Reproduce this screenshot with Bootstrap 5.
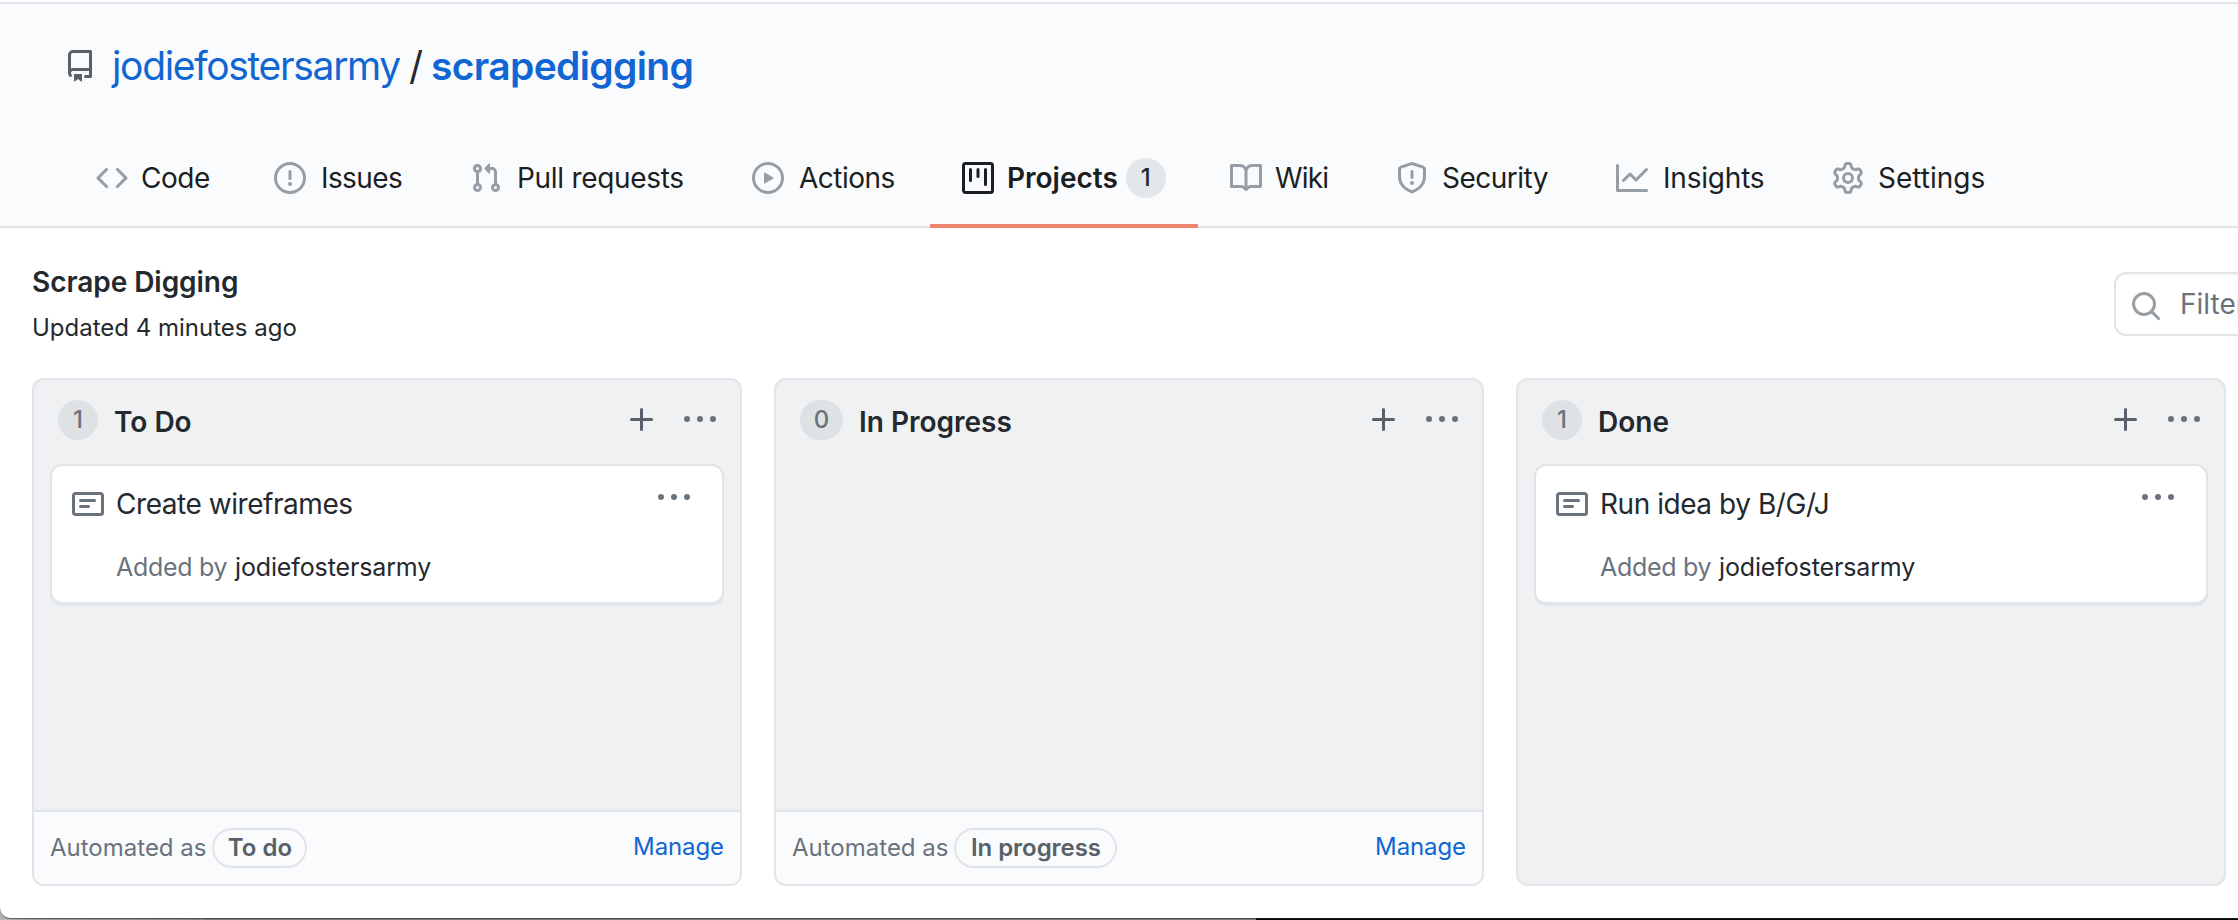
<!DOCTYPE html>
<html lang="en">
<head>
<meta charset="utf-8">
<title>Scrape Digging</title>
<link rel="stylesheet" href="https://cdn.jsdelivr.net/npm/bootstrap@5.3.0/dist/css/bootstrap.min.css">
<script src="https://cdn.jsdelivr.net/npm/bootstrap@5.3.0/dist/js/bootstrap.bundle.min.js"></script>
<style>
  html { height: 920px; overflow: hidden; }
  body {
    height: 920px; overflow: hidden;
    font-family: Inter, "Liberation Sans", sans-serif; font-size: 28px; color: #24292e;
    background: linear-gradient(90deg, #b4b4b4 0, #9a9a9a 40px, #858585 205px, #75797e 206px, #75797e 1256px, #04060f 1256px);
  }
  svg { fill: currentColor; flex: none; display: block; }
  .window { height: 918px; padding-top: 2px; background: #fff; border-bottom-left-radius: 10px; overflow: hidden; box-shadow: 0 1px 0 rgba(40,40,40,.55); }
  .repo-head { height: 226px; background: #fafbfc; border-top: 2px solid #e1e4e8; border-bottom: 2px solid #e1e4e8; padding: 46px 64px 0; }
  .repo-title { height: 32px; font-size: 39px; line-height: 32px; color: #24292e; }
  .repo-title svg { color: #586069; margin-right: 16px; }
  .repo-title a, .manage { color: #1066d2; text-decoration: none; }
  .owner { letter-spacing: -1.33px; }
  .slash { margin: 0 8px 0 9px; }
  .name { letter-spacing: -.67px; font-weight: 600; }
  .tabs { margin-top: 50px; }
  .tabs .nav-link { height: 96px; padding: 0 0 0 32px; border-bottom: 4px solid transparent; color: #1b1f23; line-height: 36px; white-space: nowrap; }
  .tabs .nav-link svg { color: #959da5; margin-right: 13px; }
  .tabs .nav-link.active { font-weight: 600; border-bottom-color: #f0866f; color: #1b1f23; }
  .tabs .nav-link.active svg { color: #1b1f23; }
  .t-code { width: 178px; letter-spacing: -.47px; }
  .t-issues { width: 196px; letter-spacing: -.6px; }
  .tabs .t-issues svg { margin-right: 15px; }
  .t-pulls { width: 282px; letter-spacing: -.3px; }
  .tabs .t-pulls svg { margin-right: 15px; }
  .t-actions { width: 210px; letter-spacing: -.5px; }
  .tabs .t-actions svg { margin-right: 15px; }
  .t-projects { width: 268px; }
  .t-wiki { width: 166px; letter-spacing: -.85px; }
  .tabs .t-wiki svg { margin-right: 13px; }
  .t-security { width: 220px; letter-spacing: -.5px; }
  .tabs .t-security svg { margin-right: 14px; }
  .t-insights { width: 216px; letter-spacing: -.2px; }
  .tabs .t-insights svg { margin-right: 15px; }
  .tabs .t-settings svg { margin-right: 14px; }
  .count { width: 40px; height: 40px; border-radius: 20px; text-align: center; font-size: 24px; line-height: 39px; font-weight: 500; flex: none; }
  .count.zero { width: 43px; }
  .tabs .count { margin-left: 8px; background: #e4e7ea; color: #24292e; line-height: 40px; }
  .board-head { height: 150px; padding: 34px 0 0 32px; }
  .board-head h1 { font-size: 28px; line-height: 40px; font-weight: 600; letter-spacing: -.05px; margin: 0 0 6px; }
  .board-head p { font-size: 24px; line-height: 40px; margin: 0; }
  .filter { width: 124px; height: 64px; margin-top: 10px; padding-left: 14px; border: 2px solid #e1e4e8; border-right: 0; border-radius: 12px 0 0 12px; color: #6a737d; box-shadow: inset 0 2px 0 rgba(225,228,232,.25); overflow: hidden; }
  .filter svg { color: #959da5; margin-right: 18px; margin-top: 4px; }
  .board { gap: 32px; padding-left: 32px; }
  .lane { width: 710px; height: 508px; flex: none; background: #eff1f3; border: 2px solid #e1e4e8; border-radius: 12px; overflow: hidden; }
  .lane-head { height: 84px; padding: 20px 24px 0 24px; }
  .lane-head .count { background: #dfe2e5; color: #6a737d; }
  .lane-head h2 { font-size: 28px; line-height: 44px; font-weight: 600; margin: 0 auto 0 16px; }
  .lane-head svg { margin-top: 4px; color: #6a737d; }
  .lane-head svg.plus { color: #586069; margin-right: 26px; }
  .note { margin: 0 16px; height: 140px; padding: 20px 32px 0 20px; background: #fff; border: 2px solid #e1e4e8; border-radius: 12px; box-shadow: 0 2px 1px rgba(27,31,35,.05); color: #6a737d; }
  .note .kind { margin: 2px 12px 0 0; }
  .note .more { margin: -4px 0 0 auto; }
  .note .body-text { color: #24292e; line-height: 36px; letter-spacing: -.45px; }
  .note .by { margin: 27px 0 0 44px; font-size: 25px; line-height: 36px; letter-spacing: -.3px; white-space: nowrap; }
  .note .by b { color: #24292e; font-weight: 400; letter-spacing: -.13px; margin-left: 1px; }
  .lane-foot { height: 74px; border-top: 2px solid #e1e4e8; background: #fafbfc; padding: 0 16px; font-size: 24px; line-height: 36px; color: #6a737d; }
  .pill { height: 40px; width: 95px; margin-left: 6px; border: 2px solid #e1e4e8; border-radius: 20px; text-align: center; font-weight: 600; color: #586069; }
  .pill.wide { width: 163px; letter-spacing: -.05px; }
  .manage { margin: -3px 0 0 auto; letter-spacing: -.1px; }
</style>
</head>
<body>
<svg width="0" height="0" class="position-absolute">
  <symbol id="plus" viewBox="0 0 16 16"><path d="M7.75 2a.75.75 0 01.75.75V7h4.25a.75.75 0 110 1.5H8.5v4.25a.75.75 0 11-1.5 0V8.5H2.75a.75.75 0 010-1.5H7V2.75A.75.75 0 017.75 2z"/></symbol>
  <symbol id="dots" viewBox="0 0 16 16"><path d="M8 9a1.5 1.5 0 100-3 1.5 1.5 0 000 3zM1.5 9a1.5 1.5 0 100-3 1.5 1.5 0 000 3zm13 0a1.5 1.5 0 100-3 1.5 1.5 0 000 3z"/></symbol>
  <symbol id="note" viewBox="0 0 16 16"><path fill-rule="evenodd" d="M0 3.75C0 2.784.784 2 1.75 2h12.5c.966 0 1.75.784 1.75 1.75v8.5A1.75 1.75 0 0114.25 14H1.75A1.75 1.75 0 010 12.25v-8.5zm1.75-.25a.25.25 0 00-.25.25v8.5c0 .138.112.25.25.25h12.5a.25.25 0 00.25-.25v-8.5a.25.25 0 00-.25-.25H1.75zM3.5 6.25a.75.75 0 01.75-.75h7a.75.75 0 010 1.5h-7a.75.75 0 01-.75-.75zm.75 2.25a.75.75 0 000 1.5h4a.75.75 0 000-1.5h-4z"/></symbol>
</svg>
<div class="window">
  <header class="repo-head">
    <div class="repo-title d-flex align-items-center">
      <svg width="32" height="32" viewBox="0 0 16 16"><path fill-rule="evenodd" d="M2 2.5A2.5 2.5 0 014.5 0h8.75a.75.75 0 01.75.75v12.5a.75.75 0 01-.75.75h-2.5a.75.75 0 110-1.5h1.75v-2h-8a1 1 0 00-.714 1.7.75.75 0 01-1.072 1.05A2.495 2.495 0 012 11.5v-9zm10.5-1V9h-8c-.356 0-.694.074-1 .208V2.5a1 1 0 011-1h8zM5 12.25v3.25a.25.25 0 00.4.2l1.45-1.087a.25.25 0 01.3 0L8.6 15.7a.25.25 0 00.4-.2v-3.25a.25.25 0 00-.25-.25h-3.5a.25.25 0 00-.25.25z"/></svg>
      <a href="#" class="owner">jodiefostersarmy</a><span class="slash">/</span><a href="#" class="name">scrapedigging</a>
    </div>
    <nav class="nav tabs flex-nowrap">
      <a href="#" class="nav-link d-flex align-items-center t-code"><svg width="32" height="32" viewBox="0 0 16 16"><path fill-rule="evenodd" d="M4.72 3.22a.75.75 0 011.06 1.06L2.06 8l3.72 3.72a.75.75 0 11-1.06 1.06L.47 8.53a.75.75 0 010-1.06l4.25-4.25zm6.56 0a.75.75 0 10-1.06 1.06L13.94 8l-3.72 3.72a.75.75 0 101.06 1.06l4.25-4.25a.75.75 0 000-1.06l-4.25-4.25z"/></svg>Code</a>
      <a href="#" class="nav-link d-flex align-items-center t-issues"><svg width="32" height="32" viewBox="0 0 16 16"><path fill-rule="evenodd" d="M8 1.5a6.5 6.5 0 100 13 6.5 6.5 0 000-13zM0 8a8 8 0 1116 0A8 8 0 010 8zm9 3a1 1 0 11-2 0 1 1 0 012 0zm-.25-6.25a.75.75 0 00-1.5 0v3.5a.75.75 0 001.5 0v-3.5z"/></svg>Issues</a>
      <a href="#" class="nav-link d-flex align-items-center t-pulls"><svg width="32" height="32" viewBox="0 0 16 16"><path fill-rule="evenodd" d="M7.177 3.073L9.573.677A.25.25 0 0110 .854v4.792a.25.25 0 01-.427.177L7.177 3.427a.25.25 0 010-.354zM3.75 2.5a.75.75 0 100 1.5.75.75 0 000-1.5zm-2.25.75a2.25 2.25 0 113 2.122v5.256a2.251 2.251 0 11-1.5 0V5.372A2.25 2.25 0 011.5 3.25zM11 2.5h-1V4h1a1 1 0 011 1v5.628a2.251 2.251 0 101.5 0V5A2.5 2.5 0 0011 2.5zm1 10.25a.75.75 0 111.5 0 .75.75 0 01-1.5 0zM3.75 12a.75.75 0 100 1.5.75.75 0 000-1.5z"/></svg>Pull requests</a>
      <a href="#" class="nav-link d-flex align-items-center t-actions"><svg width="32" height="32" viewBox="0 0 16 16"><path fill-rule="evenodd" d="M1.5 8a6.5 6.5 0 1113 0 6.5 6.5 0 01-13 0zM8 0a8 8 0 100 16A8 8 0 008 0zM6.379 5.227A.25.25 0 006 5.442v5.117a.25.25 0 00.379.214l4.264-2.559a.25.25 0 000-.428L6.379 5.227z"/></svg>Actions</a>
      <a href="#" class="nav-link d-flex align-items-center t-projects active"><svg width="32" height="32" viewBox="0 0 16 16"><path fill-rule="evenodd" d="M1.75 0A1.75 1.75 0 000 1.75v12.5C0 15.216.784 16 1.75 16h12.5A1.75 1.75 0 0016 14.25V1.75A1.75 1.75 0 0014.25 0H1.75zM1.5 1.75a.25.25 0 01.25-.25h12.5a.25.25 0 01.25.25v12.5a.25.25 0 01-.25.25H1.75a.25.25 0 01-.25-.25V1.75zM11.75 3a.75.75 0 00-.75.75v7.5a.75.75 0 001.5 0v-7.5a.75.75 0 00-.75-.75zm-8.25.75a.75.75 0 011.5 0v5.5a.75.75 0 01-1.5 0v-5.5zM8 3a.75.75 0 00-.75.75v3.5a.75.75 0 001.5 0v-3.5A.75.75 0 008 3z"/></svg>Projects<span class="count">1</span></a>
      <a href="#" class="nav-link d-flex align-items-center t-wiki"><svg width="32" height="32" viewBox="0 0 16 16"><path fill-rule="evenodd" d="M0 1.75A.75.75 0 01.75 1h4.253c1.227 0 2.317.59 3 1.501A3.744 3.744 0 0111.006 1h4.245a.75.75 0 01.75.75v10.5a.75.75 0 01-.75.75h-4.507a2.25 2.25 0 00-1.591.659l-.622.621a.75.75 0 01-1.06 0l-.622-.621A2.25 2.25 0 005.258 13H.75a.75.75 0 01-.75-.75V1.75zm8.755 3a2.25 2.25 0 012.25-2.25H14.5v9h-3.757c-.71 0-1.4.201-1.992.572l.004-7.322zm-1.504 7.324l.004-5.073-.002-2.253A2.25 2.25 0 005.003 2.5H1.5v9h3.757a3.75 3.75 0 011.994.574z"/></svg>Wiki</a>
      <a href="#" class="nav-link d-flex align-items-center t-security"><svg width="32" height="32" viewBox="0 0 16 16"><path fill-rule="evenodd" d="M7.467.133a1.75 1.75 0 011.066 0l5.25 1.68A1.75 1.75 0 0115 3.48V7c0 1.566-.32 3.182-1.303 4.682-.983 1.498-2.585 2.813-5.032 3.855a1.7 1.7 0 01-1.33 0c-2.447-1.042-4.049-2.357-5.032-3.855C1.32 10.182 1 8.566 1 7V3.48a1.75 1.75 0 011.217-1.667l5.25-1.68zm.61 1.429a.25.25 0 00-.153 0l-5.25 1.68a.25.25 0 00-.174.238V7c0 1.358.275 2.666 1.057 3.86.784 1.194 2.121 2.34 4.366 3.297a.2.2 0 00.154 0c2.245-.956 3.582-2.104 4.366-3.298C13.225 9.666 13.5 8.36 13.5 7V3.48a.25.25 0 00-.174-.237l-5.25-1.68zM9 10.5a1 1 0 11-2 0 1 1 0 012 0zm-.25-5.75a.75.75 0 10-1.5 0v3a.75.75 0 001.5 0v-3z"/></svg>Security</a>
      <a href="#" class="nav-link d-flex align-items-center t-insights"><svg width="32" height="32" viewBox="0 0 16 16"><path fill-rule="evenodd" d="M1.5 1.75a.75.75 0 00-1.5 0v12.5c0 .414.336.75.75.75h14.5a.75.75 0 000-1.5H1.5V1.75zm14.28 2.53a.75.75 0 00-1.06-1.06L10 7.94 7.53 5.47a.75.75 0 00-1.06 0L3.22 8.72a.75.75 0 001.06 1.06L7 7.06l2.47 2.47a.75.75 0 001.06 0l5.25-5.25z"/></svg>Insights</a>
      <a href="#" class="nav-link d-flex align-items-center t-settings"><svg width="32" height="32" viewBox="0 0 16 16"><path fill-rule="evenodd" d="M7.429 1.525a6.593 6.593 0 011.142 0c.036.003.108.036.137.146l.289 1.105c.147.56.55.967.997 1.189.174.086.341.183.501.29.417.278.97.423 1.53.27l1.102-.303c.11-.03.175.016.195.046.219.31.41.641.573.989.014.031.022.11-.059.19l-.815.806c-.411.406-.562.957-.53 1.456a4.588 4.588 0 010 .582c-.032.499.119 1.05.53 1.456l.815.806c.08.08.073.159.059.19a6.494 6.494 0 01-.573.99c-.02.029-.086.074-.195.045l-1.103-.303c-.559-.153-1.112-.008-1.529.27-.16.107-.327.204-.5.29-.449.222-.851.628-.998 1.189l-.289 1.105c-.029.11-.101.143-.137.146a6.613 6.613 0 01-1.142 0c-.036-.003-.108-.037-.137-.146l-.289-1.105c-.147-.56-.55-.967-.997-1.189a4.502 4.502 0 01-.501-.29c-.417-.278-.97-.423-1.53-.27l-1.102.303c-.11.03-.175-.016-.195-.046a6.492 6.492 0 01-.573-.989c-.014-.031-.022-.11.059-.19l.815-.806c.411-.406.562-.957.53-1.456a4.587 4.587 0 010-.582c.032-.499-.119-1.05-.53-1.456l-.815-.806c-.08-.08-.073-.159-.059-.19a6.44 6.44 0 01.573-.99c.02-.029.086-.075.195-.045l1.103.303c.559.153 1.112.008 1.529-.27.16-.107.327-.204.5-.29.449-.222.851-.628.998-1.189l.289-1.105c.029-.11.101-.143.137-.146zM8 0c-.236 0-.47.01-.701.03-.743.065-1.29.615-1.458 1.261l-.29 1.106c-.017.066-.078.158-.211.224a5.994 5.994 0 00-.668.386c-.123.082-.233.09-.3.071L3.27 2.776c-.644-.177-1.392.02-1.82.63a7.977 7.977 0 00-.704 1.217c-.315.675-.111 1.422.363 1.891l.815.806c.05.048.098.147.088.294a6.084 6.084 0 000 .772c.01.147-.038.246-.088.294l-.815.806c-.474.469-.678 1.216-.363 1.891.2.428.436.835.704 1.218.428.609 1.176.806 1.82.63l1.103-.303c.066-.019.176-.011.299.071.213.143.436.272.668.386.133.066.194.158.212.224l.289 1.106c.169.646.715 1.196 1.458 1.26a8.094 8.094 0 001.402 0c.743-.064 1.29-.614 1.458-1.26l.29-1.106c.017-.066.078-.158.211-.224a5.98 5.98 0 00.668-.386c.123-.082.233-.09.3-.071l1.102.302c.644.177 1.392-.02 1.82-.63.268-.382.505-.789.704-1.217.315-.675.111-1.422-.364-1.891l-.814-.806c-.05-.048-.098-.147-.088-.294a6.1 6.1 0 000-.772c-.01-.147.039-.246.088-.294l.814-.806c.475-.469.679-1.216.364-1.891a7.992 7.992 0 00-.704-1.218c-.428-.609-1.176-.806-1.82-.63l-1.103.303c-.066.019-.176.011-.299-.071a5.991 5.991 0 00-.668-.386c-.133-.066-.194-.158-.212-.224L10.16 1.29C9.99.645 9.444.095 8.701.031A8.094 8.094 0 008 0zm1.5 8a1.5 1.5 0 11-3 0 1.5 1.5 0 013 0zM11 8a3 3 0 11-6 0 3 3 0 016 0z"/></svg>Settings</a>
    </nav>
  </header>

  <div class="board-head d-flex justify-content-between align-items-start">
    <div>
      <h1>Scrape Digging</h1>
      <p>Updated 4 minutes ago</p>
    </div>
    <div class="filter d-flex align-items-center text-nowrap">
      <svg width="32" height="32" viewBox="0 0 16 16"><path fill-rule="evenodd" d="M11.5 7a4.499 4.499 0 11-8.998 0A4.499 4.499 0 0111.5 7zm-.82 4.74a6 6 0 111.06-1.06l3.04 3.04a.75.75 0 11-1.06 1.06l-3.04-3.04z"/></svg><span>Filter</span>
    </div>
  </div>

  <main class="board d-flex">
    <section class="lane d-flex flex-column">
      <div class="lane-head d-flex align-items-start">
        <span class="count">1</span><h2>To Do</h2>
        <svg class="plus" width="32" height="32"><use href="#plus"/></svg><svg width="32" height="32"><use href="#dots"/></svg>
      </div>
      <article class="note">
        <div class="d-flex align-items-start"><svg class="kind" width="32" height="32"><use href="#note"/></svg><span class="body-text">Create wireframes</span><svg class="more" width="32" height="32"><use href="#dots"/></svg></div>
        <div class="by">Added by <b>jodiefostersarmy</b></div>
      </article>
      <div class="lane-foot d-flex align-items-center mt-auto"><span>Automated as</span><span class="pill">To do</span><a href="#" class="manage">Manage</a></div>
    </section>

    <section class="lane d-flex flex-column">
      <div class="lane-head d-flex align-items-start">
        <span class="count zero">0</span><h2>In Progress</h2>
        <svg class="plus" width="32" height="32"><use href="#plus"/></svg><svg width="32" height="32"><use href="#dots"/></svg>
      </div>
      <div class="lane-foot d-flex align-items-center mt-auto"><span>Automated as</span><span class="pill wide">In progress</span><a href="#" class="manage">Manage</a></div>
    </section>

    <section class="lane d-flex flex-column">
      <div class="lane-head d-flex align-items-start">
        <span class="count">1</span><h2>Done</h2>
        <svg class="plus" width="32" height="32"><use href="#plus"/></svg><svg width="32" height="32"><use href="#dots"/></svg>
      </div>
      <article class="note">
        <div class="d-flex align-items-start"><svg class="kind" width="32" height="32"><use href="#note"/></svg><span class="body-text">Run idea by B/G/J</span><svg class="more" width="32" height="32"><use href="#dots"/></svg></div>
        <div class="by">Added by <b>jodiefostersarmy</b></div>
      </article>
    </section>
  </main>
</div>
</body>
</html>
